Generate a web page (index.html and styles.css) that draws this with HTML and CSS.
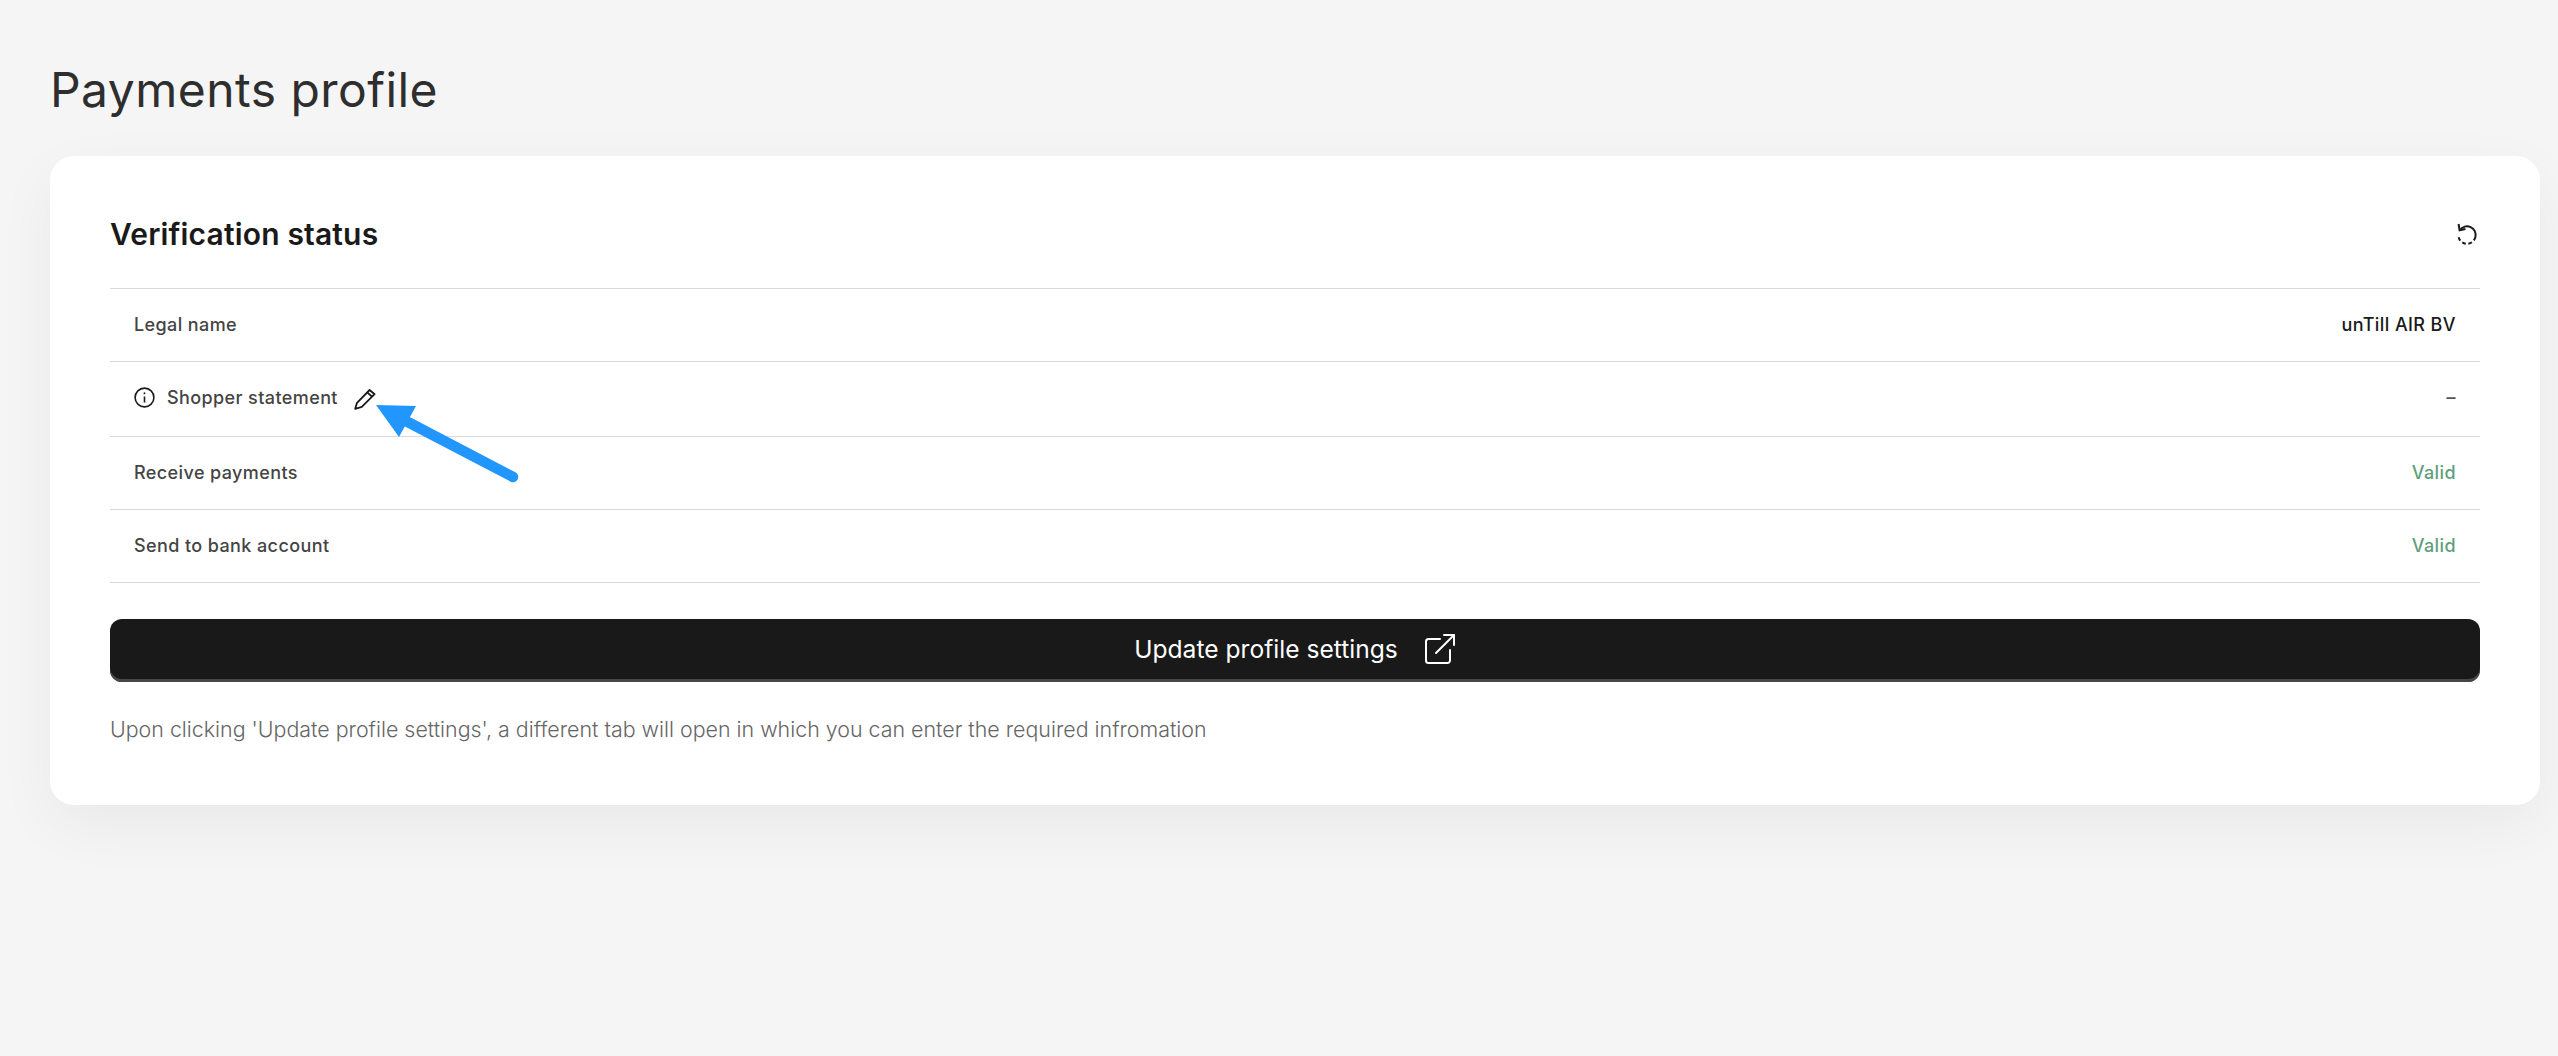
FILE: index.html
```html
<!DOCTYPE html>
<html lang="en">
<head>
    <meta charset="UTF-8">
    <meta name="viewport" content="width=device-width, initial-scale=1.0">
    <title>Payments profile</title>
    <link rel="stylesheet" href="styles.css">
</head>
<body>

<h1 class="page-title">Payments profile</h1>

<div class="card">
    <div class="card-header">
        <h2>Verification status</h2>
        <svg class="refresh-icon" width="22" height="22" viewBox="0 0 22 22" fill="none" stroke="#1a1a1a" stroke-width="2">
            <path d="M3.96 7.07A8.6 8.6 0 0 1 19.4 14"/>
            <path d="M19.4 14A8.6 8.6 0 0 1 2.4 12" stroke-dasharray="3.8 2.6"/>
            <path d="M2.6 1L3.6 7.2L9.4 6"/>
        </svg>
    </div>

    <div class="row">
        <div class="row-label">Legal name</div>
        <div class="row-value">unTill AIR BV</div>
    </div>
    <div class="row row-tall">
        <div class="row-label">
            <svg class="info-icon" width="21" height="21" viewBox="0 0 21 21" fill="none" stroke="#1a1a1a" stroke-width="1.6">
                <circle cx="10.5" cy="10.5" r="9.4"/>
                <path d="M10.5 9.5V15.5"/>
                <path d="M10.5 5.4V7.2"/>
            </svg>
            Shopper statement
            <svg class="edit-icon" width="22" height="22" viewBox="0 0 22 22" fill="none" stroke="#1a1a1a" stroke-width="1.8" stroke-linejoin="round">
                <path d="M1.2 20.8L3 14.8L15.6 2L20.6 6.2L7.8 18.9Z"/>
                <path d="M13.2 4.4L18.2 8.7"/>
            </svg>
        </div>
        <div class="row-value row-empty">–</div>
    </div>
    <div class="row">
        <div class="row-label">Receive payments</div>
        <div class="row-value valid">Valid</div>
    </div>
    <div class="row">
        <div class="row-label">Send to bank account</div>
        <div class="row-value valid">Valid</div>
    </div>

    <button class="update-btn" type="button">
        Update profile settings
        <svg width="32" height="32" viewBox="0 0 32 32" fill="none" stroke="#fff" stroke-width="2" stroke-linecap="round" stroke-linejoin="round">
            <path d="M16 6H4.5A2.5 2.5 0 0 0 2 8.5V27.5A2.5 2.5 0 0 0 4.5 30H23.5A2.5 2.5 0 0 0 26 27.5V17"/>
            <path d="M12 20L30 2"/>
            <path d="M20 2H30V12"/>
        </svg>
    </button>

    <p class="note">Upon clicking 'Update profile settings', a different tab will open in which you can enter the required infromation</p>

    <!-- annotation drawn over the screenshot -->
    <svg class="arrow" width="150" height="90" viewBox="0 0 150 90">
        <path d="M6 9L46 10L29 41Z" fill="#2196fc"/>
        <path d="M34 24L143 81" stroke="#2196fc" stroke-width="10.5" stroke-linecap="round"/>
    </svg>
</div>

</body>
</html>
```

FILE: styles.css
```css
* {
    box-sizing: border-box;
}
body {
    margin: 0;
    min-height: 100vh;
    padding: 60px 18px 0 50px;
    background-color: #f5f5f5;
    font-family: Inter, "Liberation Sans", sans-serif;
}
.page-title {
    margin: 0 0 36px 0;
    height: 60px;
    font-size: 48px;
    line-height: 60px;
    font-weight: 400;
    letter-spacing: 0.45px;
    color: #2e2e2e;
}
.card {
    position: relative;
    height: 649px;
    padding: 48px 60px 0 60px;
    background-color: white;
    border-radius: 24px;
    box-shadow: 0 20px 60px rgba(0, 0, 0, 0.05);
}
.card-header {
    display: flex;
    justify-content: space-between;
    align-items: center;
    height: 85px;
    padding: 0 0 25px 0;
    border-bottom: 1px solid #d9d9d9;
}
.card-header h2 {
    margin: 0;
    font-size: 30px;
    font-weight: 600;
    letter-spacing: 0.17px;
    color: #1a1a1a;
}
.refresh-icon {
    margin-right: 2px;
}
.row {
    display: flex;
    justify-content: space-between;
    align-items: center;
    height: 73px;
    padding: 0 24px 1px 24px;
    border-bottom: 1px solid #d9d9d9;
    font-size: 18px;
    font-weight: 550;
    letter-spacing: 0.4px;
}
.row-tall {
    height: 75px;
    padding-bottom: 3px;
}
.row-label {
    display: flex;
    align-items: center;
    color: #444444;
}
.info-icon {
    margin-right: 12px;
}
.edit-icon {
    margin: 3px 0 0 16px;
}
.row-value {
    color: #1a1a1a;
}
.row-empty {
    color: #555555;
}
.valid {
    color: #5fa07c;
}
.update-btn {
    display: flex;
    justify-content: center;
    align-items: center;
    gap: 26px;
    width: 100%;
    height: 63px;
    margin-top: 36px;
    padding: 0 0 3px 0;
    border: none;
    border-radius: 12px;
    background-color: #191919;
    box-shadow: inset 0 -3px 0 #474747;
    color: white;
    font-family: inherit;
    font-size: 24.6px;
    font-weight: 400;
}
.note {
    margin: 31px 0 0 0;
    font-size: 21.4px;
    line-height: 32px;
    font-weight: 300;
    color: #666666;
}
.arrow {
    position: absolute;
    left: 320px;
    top: 240px;
}
```
